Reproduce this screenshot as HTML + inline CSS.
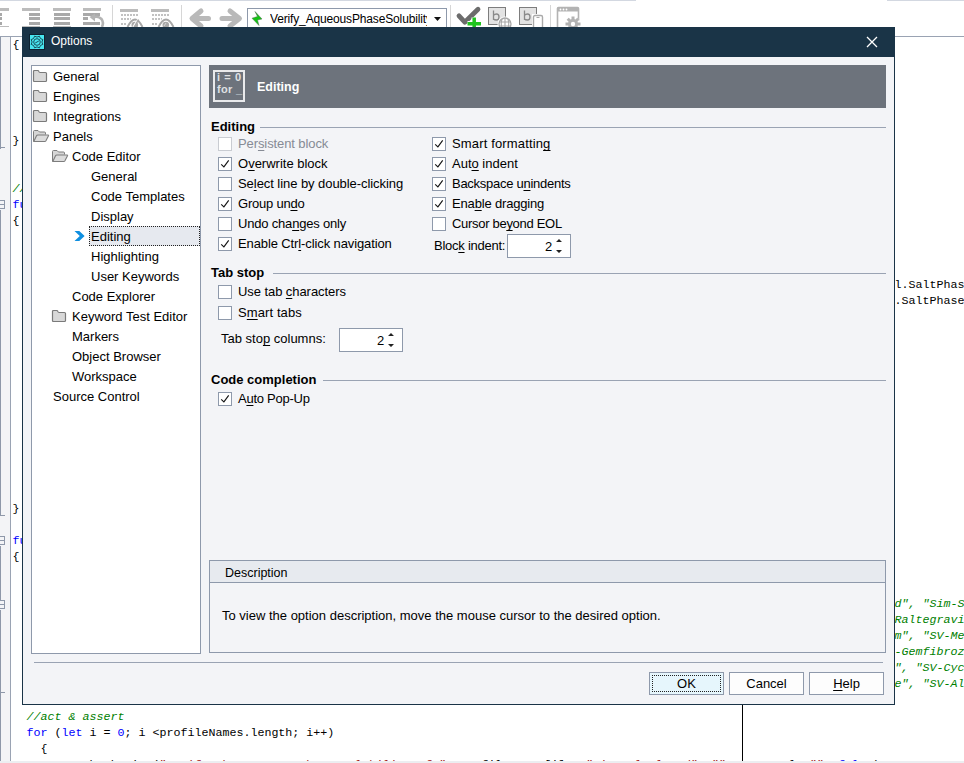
<!DOCTYPE html><html><head><meta charset="utf-8"><style>
html,body{margin:0;padding:0;}
body{width:964px;height:763px;position:relative;overflow:hidden;background:#fff;font-family:"Liberation Sans",sans-serif;}
.t{position:absolute;white-space:pre;}
u{text-decoration:underline;text-underline-offset:1.5px;text-decoration-skip-ink:none;}
svg{position:absolute;overflow:visible;}
</style></head><body>
<div style="position:absolute;left:0px;top:0px;width:636px;height:1px;background:#d3d8e1"></div>
<div style="position:absolute;left:887px;top:0px;width:77px;height:1px;background:#d3d8e1"></div>
<div style="position:absolute;left:0px;top:8px;width:9px;height:3px;background:#bcbcbc"></div>
<div style="position:absolute;left:0px;top:13px;width:2px;height:3px;background:#a9a9a9"></div>
<div style="position:absolute;left:0px;top:17px;width:2px;height:3px;background:#a9a9a9"></div>
<div style="position:absolute;left:0px;top:22px;width:2px;height:3px;background:#a9a9a9"></div>
<div style="position:absolute;left:0px;top:25.5px;width:9px;height:1.5px;background:#bcbcbc"></div>
<div style="position:absolute;left:22px;top:8px;width:18px;height:3px;background:#bcbcbc"></div>
<div style="position:absolute;left:29px;top:13px;width:11px;height:3px;background:#a9a9a9"></div>
<div style="position:absolute;left:29px;top:17px;width:11px;height:3px;background:#a9a9a9"></div>
<div style="position:absolute;left:29px;top:22px;width:11px;height:3px;background:#a9a9a9"></div>
<div style="position:absolute;left:22px;top:25.5px;width:18px;height:1.5px;background:#bcbcbc"></div>
<div style="position:absolute;left:53px;top:8px;width:18px;height:3px;background:#bcbcbc"></div>
<div style="position:absolute;left:54px;top:13px;width:16px;height:3px;background:#a9a9a9"></div>
<div style="position:absolute;left:54px;top:17px;width:16px;height:3px;background:#a9a9a9"></div>
<div style="position:absolute;left:54px;top:22px;width:16px;height:3px;background:#a9a9a9"></div>
<div style="position:absolute;left:53px;top:25.5px;width:18px;height:1.5px;background:#bcbcbc"></div>
<div style="position:absolute;left:83px;top:8px;width:18px;height:3px;background:#bcbcbc"></div>
<div style="position:absolute;left:83px;top:13px;width:17px;height:3px;background:#a9a9a9"></div>
<div style="position:absolute;left:83px;top:17px;width:5px;height:3px;background:#a9a9a9"></div>
<div style="position:absolute;left:83px;top:22px;width:17px;height:3px;background:#a9a9a9"></div>
<svg style="left:88px;top:14px" width="18" height="14" viewBox="0 0 18 14"><path d="M5 3.5 Q10 1.5 13.5 5 Q16 8.5 14 13" fill="none" stroke="#b4b4b4" stroke-width="2.6"/><path d="M1.5 3 L7 -0.5 L7 7.5 Z" fill="#b4b4b4"/></svg>
<div style="position:absolute;left:112px;top:5px;width:1px;height:22px;background:#d6d6d6"></div>
<div style="position:absolute;left:181px;top:5px;width:1px;height:22px;background:#d6d6d6"></div>
<div style="position:absolute;left:450px;top:5px;width:1px;height:22px;background:#d6d6d6"></div>
<div style="position:absolute;left:550px;top:5px;width:1px;height:22px;background:#d6d6d6"></div>
<div style="position:absolute;left:120px;top:8.5px;width:18px;height:3px;background:#bcbcbc"></div>
<div style="position:absolute;left:121px;top:13.5px;width:2px;height:2px;background:#c2c2c2"></div>
<div style="position:absolute;left:124px;top:13.5px;width:2px;height:2px;background:#c2c2c2"></div>
<div style="position:absolute;left:127px;top:13.5px;width:2px;height:2px;background:#c2c2c2"></div>
<div style="position:absolute;left:130px;top:13.5px;width:2px;height:2px;background:#c2c2c2"></div>
<div style="position:absolute;left:133px;top:13.5px;width:2px;height:2px;background:#c2c2c2"></div>
<div style="position:absolute;left:136px;top:13.5px;width:2px;height:2px;background:#c2c2c2"></div>
<div style="position:absolute;left:121px;top:18px;width:2px;height:2px;background:#c2c2c2"></div>
<div style="position:absolute;left:124px;top:18px;width:2px;height:2px;background:#c2c2c2"></div>
<div style="position:absolute;left:127px;top:18px;width:2px;height:2px;background:#c2c2c2"></div>
<div style="position:absolute;left:130px;top:18px;width:1px;height:2px;background:#c2c2c2"></div>
<div style="position:absolute;left:121px;top:22.7px;width:2px;height:2px;background:#c2c2c2"></div>
<div style="position:absolute;left:124px;top:22.7px;width:2px;height:2px;background:#c2c2c2"></div>
<svg style="left:126px;top:17px" width="18" height="11" viewBox="0 0 18 11"><path d="M0.5 10.5 Q9 -6 17.5 10.5" fill="#fff" stroke="#ffffff" stroke-width="3"/><path d="M1.5 10 Q9 -5 16.5 10" fill="none" stroke="#a8a8a8" stroke-width="1.9"/><circle cx="8.8" cy="8" r="3.3" fill="#a8a8a8"/><path d="M7 9 L9 6" stroke="#d8d8d8" stroke-width="0.9"/><path d="M6 11.5 L12 2" stroke="#fff" stroke-width="1.2"/><path d="M7.5 11.5 L12.5 2.5" stroke="#a8a8a8" stroke-width="1.4"/></svg>
<div style="position:absolute;left:151px;top:8.5px;width:18px;height:3px;background:#bcbcbc"></div>
<div style="position:absolute;left:152px;top:13.5px;width:2px;height:2px;background:#c2c2c2"></div>
<div style="position:absolute;left:155px;top:13.5px;width:2px;height:2px;background:#c2c2c2"></div>
<div style="position:absolute;left:158px;top:13.5px;width:2px;height:2px;background:#c2c2c2"></div>
<div style="position:absolute;left:161px;top:13.5px;width:2px;height:2px;background:#c2c2c2"></div>
<div style="position:absolute;left:164px;top:13.5px;width:2px;height:2px;background:#c2c2c2"></div>
<div style="position:absolute;left:167px;top:13.5px;width:2px;height:2px;background:#c2c2c2"></div>
<div style="position:absolute;left:152px;top:18px;width:2px;height:2px;background:#c2c2c2"></div>
<div style="position:absolute;left:155px;top:18px;width:2px;height:2px;background:#c2c2c2"></div>
<div style="position:absolute;left:158px;top:18px;width:2px;height:2px;background:#c2c2c2"></div>
<div style="position:absolute;left:161px;top:18px;width:1px;height:2px;background:#c2c2c2"></div>
<div style="position:absolute;left:152px;top:22.7px;width:2px;height:2px;background:#c2c2c2"></div>
<div style="position:absolute;left:155px;top:22.7px;width:2px;height:2px;background:#c2c2c2"></div>
<svg style="left:157px;top:17px" width="18" height="11" viewBox="0 0 18 11"><path d="M0.5 10.5 Q9 -6 17.5 10.5" fill="#fff" stroke="#ffffff" stroke-width="3"/><path d="M1.5 10 Q9 -5 16.5 10" fill="none" stroke="#a8a8a8" stroke-width="1.9"/><circle cx="8.8" cy="8" r="3.3" fill="#a8a8a8"/><path d="M7 9 L9 6" stroke="#d8d8d8" stroke-width="0.9"/></svg>
<svg style="left:188px;top:7px" width="56" height="21" viewBox="0 0 56 21"><path d="M13 4 L4 11.5 L13 19 M5 11.5 L20.5 11.5" fill="none" stroke="#b9b9b9" stroke-width="5" stroke-linecap="round" stroke-linejoin="round"/><path d="M42 4 L51.5 11.5 L42 19 M50 11.5 L34 11.5" fill="none" stroke="#b9b9b9" stroke-width="5" stroke-linecap="round" stroke-linejoin="round"/></svg>
<div style="position:absolute;left:247px;top:8px;width:200px;height:22px;background:#fff;box-sizing:border-box;border:1px solid #8e99ab"></div>
<svg style="left:251px;top:11px" width="12" height="15" viewBox="0 0 12 15"><path d="M4 0.5 L6.5 5.5 L1 7.2 L8 14.5 L6.5 9 L11 8 Z" fill="#12c412" stroke="#5a6a5a" stroke-width="0.5"/></svg>
<div class="t" style="left:270px;top:9px;width:157px;height:20px;overflow:hidden;font-size:12px;line-height:20px;letter-spacing:-0.15px">Verify_AqueousPhaseSolubility</div>
<svg style="left:434px;top:17px" width="7" height="4" viewBox="0 0 7 4"><path d="M0 0 L7 0 L3.5 4 Z" fill="#111"/></svg>
<svg style="left:456px;top:6px" width="26" height="22" viewBox="0 0 26 22"><path d="M3 9.8 L8.8 16.2 L22 3.2" fill="none" stroke="#6c6c6c" stroke-width="4.8" stroke-linecap="round" stroke-linejoin="round"/><path d="M11.5 17.7 L25 17.7 M18.2 11.4 L18.2 22" stroke="#fff" stroke-width="5.5"/><path d="M11.5 17.7 L25 17.7 M18.2 11.4 L18.2 22" stroke="#1fc41f" stroke-width="3.5"/></svg>
<div style="position:absolute;left:488px;top:7px;width:18px;height:18px;background:#e3e3e3;box-sizing:border-box;border:1.5px solid #7d7d7d"></div>
<svg style="left:488px;top:7px" width="18" height="18" viewBox="0 0 18 18"><path d="M5.5 3.5 L5.5 13 M5.5 8.5 Q6.5 7 8.5 7 Q11 7 11 10 Q11 13 8.5 13 Q6.5 13 5.5 12" fill="none" stroke="#8a8a8a" stroke-width="1.3"/></svg>
<svg style="left:496px;top:15px" width="18" height="13" viewBox="0 0 18 13"><circle cx="9" cy="9" r="7.5" fill="#fff"/><circle cx="9" cy="9" r="6" fill="none" stroke="#a8a8a8" stroke-width="1.3"/><path d="M3 7 L15 7 M3 11 L15 11 M9 3 L9 13 M6 4 Q4.5 9 6 13 M12 4 Q13.5 9 12 13" fill="none" stroke="#a8a8a8" stroke-width="1.1"/></svg>
<div style="position:absolute;left:519px;top:7px;width:18px;height:18px;background:#e3e3e3;box-sizing:border-box;border:1.5px solid #7d7d7d"></div>
<svg style="left:519px;top:7px" width="18" height="18" viewBox="0 0 18 18"><path d="M5.5 3.5 L5.5 13 M5.5 8.5 Q6.5 7 8.5 7 Q11 7 11 10 Q11 13 8.5 13 Q6.5 13 5.5 12" fill="none" stroke="#8a8a8a" stroke-width="1.3"/></svg>
<svg style="left:532px;top:14px" width="12" height="14" viewBox="0 0 12 14"><rect x="0" y="0" width="12" height="14" fill="#fff"/><rect x="1.5" y="1.5" width="9" height="13" rx="1.5" fill="#fff" stroke="#aaaaaa" stroke-width="1.4"/><path d="M4.5 3.5 L7.5 3.5" stroke="#aaaaaa" stroke-width="1"/></svg>
<svg style="left:556px;top:6px" width="27" height="22" viewBox="0 0 27 22"><rect x="1.5" y="1.5" width="21" height="21" rx="1" fill="#fff" stroke="#b3b3b3" stroke-width="1.6"/><rect x="1.5" y="1.5" width="21" height="4" fill="#b3b3b3"/><circle cx="4.5" cy="3.5" r="0.9" fill="#fff"/><circle cx="7.5" cy="3.5" r="0.9" fill="#fff"/><circle cx="10.5" cy="3.5" r="0.9" fill="#fff"/><circle cx="17" cy="18" r="7.5" fill="#fff"/><path d="M17 10.5 L17 25.5 M9.5 18 L24.5 18 M11.7 12.7 L22.3 23.3 M22.3 12.7 L11.7 23.3" stroke="#b3b3b3" stroke-width="3"/><circle cx="17" cy="18" r="5" fill="#b3b3b3"/><circle cx="17" cy="18" r="2.2" fill="#fff"/></svg>
<div style="position:absolute;left:0px;top:36px;width:964px;height:1px;background:#9aa3b3"></div>
<div style="position:absolute;left:0px;top:37px;width:10px;height:724px;background:#f3f4f6"></div>
<div style="position:absolute;left:10px;top:37px;width:1px;height:724px;background:#9aa3b3"></div>
<div style="position:absolute;left:0px;top:37px;width:1px;height:112px;background:#8e98a9"></div>
<div style="position:absolute;left:0px;top:147px;width:5px;height:1px;background:#8e98a9"></div>
<div style="position:absolute;left:-5px;top:200px;width:10px;height:9px;box-sizing:border-box;border:1px solid #8e98a9;background:#f3f4f6"></div>
<div style="position:absolute;left:0px;top:204px;width:4px;height:1px;background:#8e98a9"></div>
<div style="position:absolute;left:0px;top:210px;width:1px;height:306px;background:#8e98a9"></div>
<div style="position:absolute;left:0px;top:515px;width:5px;height:1px;background:#8e98a9"></div>
<div style="position:absolute;left:-5px;top:536px;width:10px;height:9px;box-sizing:border-box;border:1px solid #8e98a9;background:#f3f4f6"></div>
<div style="position:absolute;left:0px;top:540px;width:4px;height:1px;background:#8e98a9"></div>
<div style="position:absolute;left:0px;top:546px;width:1px;height:54px;background:#8e98a9"></div>
<div style="position:absolute;left:-5px;top:600px;width:10px;height:9px;box-sizing:border-box;border:1px solid #8e98a9;background:#f3f4f6"></div>
<div style="position:absolute;left:0px;top:604px;width:4px;height:1px;background:#8e98a9"></div>
<div style="position:absolute;left:0px;top:610px;width:1px;height:151px;background:#8e98a9"></div>
<div style="position:absolute;left:0px;top:692px;width:5px;height:1px;background:#8e98a9"></div>
<div style="position:absolute;left:742px;top:705px;width:1px;height:56px;background:#000"></div>
<div class="t" style="left:12.5px;top:36.9px;font-family:'Liberation Mono',monospace;font-size:11.67px;line-height:16px;"><span style="color:#000;">{</span></div>
<div class="t" style="left:12.5px;top:132.9px;font-family:'Liberation Mono',monospace;font-size:11.67px;line-height:16px;"><span style="color:#000;">}</span></div>
<div class="t" style="left:12.5px;top:180.9px;font-family:'Liberation Mono',monospace;font-size:11.67px;line-height:16px;"><span style="color:#008000;font-style:italic;">//arrange</span></div>
<div class="t" style="left:12.5px;top:196.9px;font-family:'Liberation Mono',monospace;font-size:11.67px;line-height:16px;"><span style="color:#0000ff;">function</span></div>
<div class="t" style="left:12.5px;top:212.9px;font-family:'Liberation Mono',monospace;font-size:11.67px;line-height:16px;"><span style="color:#000;">{</span></div>
<div class="t" style="left:12.5px;top:500.9px;font-family:'Liberation Mono',monospace;font-size:11.67px;line-height:16px;"><span style="color:#000;">}</span></div>
<div class="t" style="left:12.5px;top:532.9px;font-family:'Liberation Mono',monospace;font-size:11.67px;line-height:16px;"><span style="color:#0000ff;">function</span></div>
<div class="t" style="left:12.5px;top:548.9px;font-family:'Liberation Mono',monospace;font-size:11.67px;line-height:16px;"><span style="color:#000;">{</span></div>
<div class="t" style="left:26.5px;top:708.9px;font-family:'Liberation Mono',monospace;font-size:11.67px;line-height:16px;"><span style="color:#008000;font-style:italic;">//act &amp; assert</span></div>
<div class="t" style="left:26.5px;top:724.9px;font-family:'Liberation Mono',monospace;font-size:11.67px;line-height:16px;"><span style="color:#0000ff;">for</span><span style="color:#000;"> (</span><span style="color:#0000ff;">let</span><span style="color:#000;"> i = </span><span style="color:#0000ff;">0</span><span style="color:#000;">; i &lt;profileNames.length; i++)</span></div>
<div class="t" style="left:40.5px;top:740.9px;font-family:'Liberation Mono',monospace;font-size:11.67px;line-height:16px;"><span style="color:#000;">{</span></div>
<div class="t" style="left:54.5px;top:757.4px;font-family:'Liberation Mono',monospace;font-size:11.67px;line-height:16px;"><span style="color:#000;">Log.CheckPoint(</span><span style="color:#a31515;">"Verify the aqueous phase solubility of ",</span><span style="color:#000;"> profileNames[i] + </span><span style="color:#a31515;">" is calculated", "",</span><span style="color:#000;"> pmNormal, </span><span style="color:#a31515;">"", </span><span style="color:#0000ff;">false</span><span style="color:#000;">);</span></div>
<div class="t" style="left:894.5px;top:276.9px;font-family:'Liberation Mono',monospace;font-size:11.67px;line-height:16px;"><span style="color:#000;">l.SaltPhase</span></div>
<div class="t" style="left:894.5px;top:292.9px;font-family:'Liberation Mono',monospace;font-size:11.67px;line-height:16px;"><span style="color:#000;">.SaltPhase</span></div>
<div class="t" style="left:894.5px;top:595.9px;font-family:'Liberation Mono',monospace;font-size:11.67px;line-height:16px;"><span style="color:#008000;font-style:italic;">d", "Sim-Sa</span></div>
<div class="t" style="left:894.5px;top:611.9px;font-family:'Liberation Mono',monospace;font-size:11.67px;line-height:16px;"><span style="color:#008000;font-style:italic;">Raltegravir</span></div>
<div class="t" style="left:894.5px;top:627.9px;font-family:'Liberation Mono',monospace;font-size:11.67px;line-height:16px;"><span style="color:#008000;font-style:italic;">m", "SV-Met</span></div>
<div class="t" style="left:894.5px;top:643.9px;font-family:'Liberation Mono',monospace;font-size:11.67px;line-height:16px;"><span style="color:#008000;font-style:italic;">-Gemfibrozil</span></div>
<div class="t" style="left:894.5px;top:659.9px;font-family:'Liberation Mono',monospace;font-size:11.67px;line-height:16px;"><span style="color:#008000;font-style:italic;">", "SV-Cycl</span></div>
<div class="t" style="left:894.5px;top:675.9px;font-family:'Liberation Mono',monospace;font-size:11.67px;line-height:16px;"><span style="color:#008000;font-style:italic;">e", "SV-Alp</span></div>
<div style="position:absolute;left:0px;top:761px;width:964px;height:2px;background:#eceef1"></div>
<div style="position:absolute;left:22px;top:27px;width:873px;height:678px;background:#f3f4f7;box-sizing:border-box;border:1px solid #1a3447;border-top:0"></div>
<div style="position:absolute;left:22px;top:27px;width:873px;height:30px;background:#1a3447"></div>
<svg style="left:29px;top:34px" width="16" height="16" viewBox="0 0 16 16"><rect x="0" y="0" width="16" height="16" fill="#0e2130"/><rect x="1" y="1" width="14" height="14" fill="#48e6f0"/><g transform="translate(1,1)"><path d="M9.41 1.18 L10.46 3.54 L12.82 4.59 L11.90 7.00 L12.82 9.41 L10.46 10.46 L9.41 12.82 L7.00 11.90 L4.59 12.82 L3.54 10.46 L1.18 9.41 L2.10 7.00 L1.18 4.59 L3.54 3.54 L4.59 1.18 L7.00 2.10 Z" fill="none" stroke="#123c48" stroke-width="0.9" stroke-linejoin="round"/><circle cx="7" cy="7" r="3.3" fill="none" stroke="#123c48" stroke-width="0.9"/><path d="M5.2 8 L8.8 6" fill="none" stroke="#123c48" stroke-width="0.9"/></g></svg>
<div class="t" style="left:51px;top:33.34px;font-size:12px;line-height:17px;color:#fff;font-weight:normal;font-family:'Liberation Sans',sans-serif;">Options</div>
<svg style="left:866px;top:36px" width="12" height="12" viewBox="0 0 12 12"><path d="M1 1 L11 11 M11 1 L1 11" stroke="#fff" stroke-width="1.3"/></svg>
<div style="position:absolute;left:31px;top:65px;width:170px;height:589px;background:#fff;box-sizing:border-box;border:1px solid #8e99ab"></div>
<svg style="left:33px;top:70px" width="15" height="13" viewBox="0 0 15 13"><path d="M0.5 1.5 Q0.5 0.5 1.5 0.5 L4.8 0.5 Q5.5 0.5 5.8 1.2 L6.2 2 Q6.5 2.5 7.2 2.5 L12.5 2.5 Q13.5 2.5 13.5 3.5 L13.5 10.5 Q13.5 11.5 12.5 11.5 L1.5 11.5 Q0.5 11.5 0.5 10.5 Z" fill="#d8d8d8" stroke="#7a7a7a" stroke-width="1.2"/></svg>
<div class="t" style="left:53px;top:67.50px;font-size:13px;line-height:18px;color:#000;font-weight:normal;font-family:'Liberation Sans',sans-serif;">General</div>
<svg style="left:33px;top:90px" width="15" height="13" viewBox="0 0 15 13"><path d="M0.5 1.5 Q0.5 0.5 1.5 0.5 L4.8 0.5 Q5.5 0.5 5.8 1.2 L6.2 2 Q6.5 2.5 7.2 2.5 L12.5 2.5 Q13.5 2.5 13.5 3.5 L13.5 10.5 Q13.5 11.5 12.5 11.5 L1.5 11.5 Q0.5 11.5 0.5 10.5 Z" fill="#d8d8d8" stroke="#7a7a7a" stroke-width="1.2"/></svg>
<div class="t" style="left:53px;top:87.50px;font-size:13px;line-height:18px;color:#000;font-weight:normal;font-family:'Liberation Sans',sans-serif;">Engines</div>
<svg style="left:33px;top:110px" width="15" height="13" viewBox="0 0 15 13"><path d="M0.5 1.5 Q0.5 0.5 1.5 0.5 L4.8 0.5 Q5.5 0.5 5.8 1.2 L6.2 2 Q6.5 2.5 7.2 2.5 L12.5 2.5 Q13.5 2.5 13.5 3.5 L13.5 10.5 Q13.5 11.5 12.5 11.5 L1.5 11.5 Q0.5 11.5 0.5 10.5 Z" fill="#d8d8d8" stroke="#7a7a7a" stroke-width="1.2"/></svg>
<div class="t" style="left:53px;top:107.50px;font-size:13px;line-height:18px;color:#000;font-weight:normal;font-family:'Liberation Sans',sans-serif;">Integrations</div>
<svg style="left:33px;top:130px" width="17" height="13" viewBox="0 0 17 13"><path d="M0.5 11.5 L0.5 1.5 Q0.5 0.5 1.5 0.5 L5 0.5 L6.5 2 L11.5 2 Q12.5 2 12.5 3 L12.5 4.5" fill="#d6d6d6" stroke="#7d7d7d" stroke-width="1"/><path d="M0.8 11.5 L3.5 5.8 Q3.9 5 4.8 5 L15.2 5 Q15.8 5 15.5 5.7 L12.8 11 Q12.5 11.5 11.8 11.5 Z" fill="#dcdcdc" stroke="#7d7d7d" stroke-width="1.1" stroke-linejoin="round"/></svg>
<div class="t" style="left:53px;top:127.50px;font-size:13px;line-height:18px;color:#000;font-weight:normal;font-family:'Liberation Sans',sans-serif;">Panels</div>
<svg style="left:52px;top:150px" width="17" height="13" viewBox="0 0 17 13"><path d="M0.5 11.5 L0.5 1.5 Q0.5 0.5 1.5 0.5 L5 0.5 L6.5 2 L11.5 2 Q12.5 2 12.5 3 L12.5 4.5" fill="#d6d6d6" stroke="#7d7d7d" stroke-width="1"/><path d="M0.8 11.5 L3.5 5.8 Q3.9 5 4.8 5 L15.2 5 Q15.8 5 15.5 5.7 L12.8 11 Q12.5 11.5 11.8 11.5 Z" fill="#dcdcdc" stroke="#7d7d7d" stroke-width="1.1" stroke-linejoin="round"/></svg>
<div class="t" style="left:72px;top:147.50px;font-size:13px;line-height:18px;color:#000;font-weight:normal;font-family:'Liberation Sans',sans-serif;">Code Editor</div>
<div class="t" style="left:91px;top:167.50px;font-size:13px;line-height:18px;color:#000;font-weight:normal;font-family:'Liberation Sans',sans-serif;">General</div>
<div class="t" style="left:91px;top:187.50px;font-size:13px;line-height:18px;color:#000;font-weight:normal;font-family:'Liberation Sans',sans-serif;">Code Templates</div>
<div class="t" style="left:91px;top:207.50px;font-size:13px;line-height:18px;color:#000;font-weight:normal;font-family:'Liberation Sans',sans-serif;">Display</div>
<div style="position:absolute;left:89px;top:226px;width:111px;height:20px;background:#e6e9ef;box-sizing:border-box;border:1px dotted #222"></div>
<svg style="left:74px;top:231px" width="11" height="10" viewBox="0 0 11 10"><path d="M0.5 0 L5.3 0 L10.6 5 L5.3 10 L0.5 10 L5.8 5 Z" fill="#0f8fe0"/></svg>
<div class="t" style="left:91px;top:227.50px;font-size:13px;line-height:18px;color:#000;font-weight:normal;font-family:'Liberation Sans',sans-serif;">Editing</div>
<div class="t" style="left:91px;top:247.50px;font-size:13px;line-height:18px;color:#000;font-weight:normal;font-family:'Liberation Sans',sans-serif;">Highlighting</div>
<div class="t" style="left:91px;top:267.50px;font-size:13px;line-height:18px;color:#000;font-weight:normal;font-family:'Liberation Sans',sans-serif;">User Keywords</div>
<div class="t" style="left:72px;top:287.50px;font-size:13px;line-height:18px;color:#000;font-weight:normal;font-family:'Liberation Sans',sans-serif;">Code Explorer</div>
<svg style="left:52px;top:310px" width="15" height="13" viewBox="0 0 15 13"><path d="M0.5 1.5 Q0.5 0.5 1.5 0.5 L4.8 0.5 Q5.5 0.5 5.8 1.2 L6.2 2 Q6.5 2.5 7.2 2.5 L12.5 2.5 Q13.5 2.5 13.5 3.5 L13.5 10.5 Q13.5 11.5 12.5 11.5 L1.5 11.5 Q0.5 11.5 0.5 10.5 Z" fill="#d8d8d8" stroke="#7a7a7a" stroke-width="1.2"/></svg>
<div class="t" style="left:72px;top:307.50px;font-size:13px;line-height:18px;color:#000;font-weight:normal;font-family:'Liberation Sans',sans-serif;">Keyword Test Editor</div>
<div class="t" style="left:72px;top:327.50px;font-size:13px;line-height:18px;color:#000;font-weight:normal;font-family:'Liberation Sans',sans-serif;">Markers</div>
<div class="t" style="left:72px;top:347.50px;font-size:13px;line-height:18px;color:#000;font-weight:normal;font-family:'Liberation Sans',sans-serif;">Object Browser</div>
<div class="t" style="left:72px;top:367.50px;font-size:13px;line-height:18px;color:#000;font-weight:normal;font-family:'Liberation Sans',sans-serif;">Workspace</div>
<div class="t" style="left:53px;top:387.50px;font-size:13px;line-height:18px;color:#000;font-weight:normal;font-family:'Liberation Sans',sans-serif;">Source Control</div>
<div style="position:absolute;left:209px;top:65px;width:677px;height:43px;background:#6d737c"></div>
<div style="position:absolute;left:213px;top:70px;width:32px;height:32px;box-sizing:border-box;border:2px solid #e9eaec"></div>
<div class="t" style="left:217px;top:69.69px;font-size:11px;line-height:15px;color:#dfe0e3;font-weight:bold;font-family:'Liberation Sans',sans-serif;letter-spacing:0.6px">i = 0</div>
<div class="t" style="left:217px;top:81.69px;font-size:11px;line-height:15px;color:#dfe0e3;font-weight:bold;font-family:'Liberation Sans',sans-serif;letter-spacing:0.3px">for _</div>
<div class="t" style="left:257px;top:77.67px;font-size:12.5px;line-height:18px;color:#fff;font-weight:bold;font-family:'Liberation Sans',sans-serif;">Editing</div>
<div class="t" style="left:211px;top:117.50px;font-size:13px;line-height:18px;color:#000;font-weight:bold;font-family:'Liberation Sans',sans-serif;">Editing</div>
<div style="position:absolute;left:260px;top:127px;width:626px;height:1px;background:#9aa3b3"></div>
<div style="position:absolute;left:218px;top:137px;width:14px;height:14px;background:#fff;box-sizing:border-box;border:1px solid #c9ccd2"></div>
<div class="t" style="left:238px;top:134.50px;font-size:13px;line-height:18px;color:#868b95;font-weight:normal;font-family:'Liberation Sans',sans-serif;letter-spacing:-0.1px">Per<u>s</u>istent block</div>
<div style="position:absolute;left:218px;top:157px;width:14px;height:14px;background:#fff;box-sizing:border-box;border:1px solid #8e99ab"></div>
<svg style="left:218px;top:157px" width="14" height="14" viewBox="0 0 14 14"><path d="M3.2 7.3 L5.9 9.8 L10.7 3.4" fill="none" stroke="#151515" stroke-width="1.15"/></svg>
<div class="t" style="left:238px;top:154.50px;font-size:13px;line-height:18px;color:#000;font-weight:normal;font-family:'Liberation Sans',sans-serif;letter-spacing:0px">O<u>v</u>erwrite block</div>
<div style="position:absolute;left:218px;top:177px;width:14px;height:14px;background:#fff;box-sizing:border-box;border:1px solid #8e99ab"></div>
<div class="t" style="left:238px;top:174.50px;font-size:13px;line-height:18px;color:#000;font-weight:normal;font-family:'Liberation Sans',sans-serif;letter-spacing:-0.06px">Se<u>l</u>ect line by double-clicking</div>
<div style="position:absolute;left:218px;top:197px;width:14px;height:14px;background:#fff;box-sizing:border-box;border:1px solid #8e99ab"></div>
<svg style="left:218px;top:197px" width="14" height="14" viewBox="0 0 14 14"><path d="M3.2 7.3 L5.9 9.8 L10.7 3.4" fill="none" stroke="#151515" stroke-width="1.15"/></svg>
<div class="t" style="left:238px;top:194.50px;font-size:13px;line-height:18px;color:#000;font-weight:normal;font-family:'Liberation Sans',sans-serif;letter-spacing:-0.22px">Group un<u>d</u>o</div>
<div style="position:absolute;left:218px;top:217px;width:14px;height:14px;background:#fff;box-sizing:border-box;border:1px solid #8e99ab"></div>
<div class="t" style="left:238px;top:214.50px;font-size:13px;line-height:18px;color:#000;font-weight:normal;font-family:'Liberation Sans',sans-serif;letter-spacing:-0.19px">Undo cha<u>n</u>ges only</div>
<div style="position:absolute;left:218px;top:237px;width:14px;height:14px;background:#fff;box-sizing:border-box;border:1px solid #8e99ab"></div>
<svg style="left:218px;top:237px" width="14" height="14" viewBox="0 0 14 14"><path d="M3.2 7.3 L5.9 9.8 L10.7 3.4" fill="none" stroke="#151515" stroke-width="1.15"/></svg>
<div class="t" style="left:238px;top:234.50px;font-size:13px;line-height:18px;color:#000;font-weight:normal;font-family:'Liberation Sans',sans-serif;letter-spacing:-0.11px">Enable Ctr<u>l</u>-click navigation</div>
<div style="position:absolute;left:432px;top:137px;width:14px;height:14px;background:#fff;box-sizing:border-box;border:1px solid #8e99ab"></div>
<svg style="left:432px;top:137px" width="14" height="14" viewBox="0 0 14 14"><path d="M3.2 7.3 L5.9 9.8 L10.7 3.4" fill="none" stroke="#151515" stroke-width="1.15"/></svg>
<div class="t" style="left:452px;top:134.50px;font-size:13px;line-height:18px;color:#000;font-weight:normal;font-family:'Liberation Sans',sans-serif;letter-spacing:0.15px">Smart formattin<u>g</u></div>
<div style="position:absolute;left:432px;top:157px;width:14px;height:14px;background:#fff;box-sizing:border-box;border:1px solid #8e99ab"></div>
<svg style="left:432px;top:157px" width="14" height="14" viewBox="0 0 14 14"><path d="M3.2 7.3 L5.9 9.8 L10.7 3.4" fill="none" stroke="#151515" stroke-width="1.15"/></svg>
<div class="t" style="left:452px;top:154.50px;font-size:13px;line-height:18px;color:#000;font-weight:normal;font-family:'Liberation Sans',sans-serif;letter-spacing:0px">Aut<u>o</u> indent</div>
<div style="position:absolute;left:432px;top:177px;width:14px;height:14px;background:#fff;box-sizing:border-box;border:1px solid #8e99ab"></div>
<svg style="left:432px;top:177px" width="14" height="14" viewBox="0 0 14 14"><path d="M3.2 7.3 L5.9 9.8 L10.7 3.4" fill="none" stroke="#151515" stroke-width="1.15"/></svg>
<div class="t" style="left:452px;top:174.50px;font-size:13px;line-height:18px;color:#000;font-weight:normal;font-family:'Liberation Sans',sans-serif;letter-spacing:-0.27px">Backspace u<u>n</u>indents</div>
<div style="position:absolute;left:432px;top:197px;width:14px;height:14px;background:#fff;box-sizing:border-box;border:1px solid #8e99ab"></div>
<svg style="left:432px;top:197px" width="14" height="14" viewBox="0 0 14 14"><path d="M3.2 7.3 L5.9 9.8 L10.7 3.4" fill="none" stroke="#151515" stroke-width="1.15"/></svg>
<div class="t" style="left:452px;top:194.50px;font-size:13px;line-height:18px;color:#000;font-weight:normal;font-family:'Liberation Sans',sans-serif;letter-spacing:-0.17px">Ena<u>b</u>le dragging</div>
<div style="position:absolute;left:432px;top:217px;width:14px;height:14px;background:#fff;box-sizing:border-box;border:1px solid #8e99ab"></div>
<div class="t" style="left:452px;top:214.50px;font-size:13px;line-height:18px;color:#000;font-weight:normal;font-family:'Liberation Sans',sans-serif;letter-spacing:-0.3px">Cursor be<u>y</u>ond EOL</div>
<div class="t" style="left:434px;top:236.50px;font-size:13px;line-height:18px;color:#000;font-weight:normal;font-family:'Liberation Sans',sans-serif;letter-spacing:-0.25px">Bloc<u>k</u> indent:</div>
<div style="position:absolute;left:507px;top:234px;width:64px;height:24px;background:#fff;box-sizing:border-box;border:1px solid #8e99ab"></div>
<div class="t" style="left:545px;top:237.50px;font-size:13px;line-height:18px;color:#000;font-weight:normal;font-family:'Liberation Sans',sans-serif;">2</div>
<svg style="left:556px;top:239px" width="6" height="14" viewBox="0 0 6 14"><path d="M0 3 L3 0 L6 3 Z M0 11 L3 14 L6 11 Z" fill="#222"/></svg>
<div class="t" style="left:211px;top:263.50px;font-size:13px;line-height:18px;color:#000;font-weight:bold;font-family:'Liberation Sans',sans-serif;">Tab stop</div>
<div style="position:absolute;left:273px;top:273px;width:613px;height:1px;background:#9aa3b3"></div>
<div style="position:absolute;left:218px;top:285px;width:14px;height:14px;background:#fff;box-sizing:border-box;border:1px solid #8e99ab"></div>
<div class="t" style="left:238px;top:282.50px;font-size:13px;line-height:18px;color:#000;font-weight:normal;font-family:'Liberation Sans',sans-serif;letter-spacing:-0.07px">Use tab <u>c</u>haracters</div>
<div style="position:absolute;left:218px;top:306px;width:14px;height:14px;background:#fff;box-sizing:border-box;border:1px solid #8e99ab"></div>
<div class="t" style="left:238px;top:303.50px;font-size:13px;line-height:18px;color:#000;font-weight:normal;font-family:'Liberation Sans',sans-serif;letter-spacing:0.1px">S<u>m</u>art tabs</div>
<div class="t" style="left:221px;top:329.50px;font-size:13px;line-height:18px;color:#000;font-weight:normal;font-family:'Liberation Sans',sans-serif;">Tab sto<u>p</u> columns:</div>
<div style="position:absolute;left:339px;top:328px;width:64px;height:24px;background:#fff;box-sizing:border-box;border:1px solid #8e99ab"></div>
<div class="t" style="left:377px;top:331.50px;font-size:13px;line-height:18px;color:#000;font-weight:normal;font-family:'Liberation Sans',sans-serif;">2</div>
<svg style="left:388px;top:333px" width="6" height="14" viewBox="0 0 6 14"><path d="M0 3 L3 0 L6 3 Z M0 11 L3 14 L6 11 Z" fill="#222"/></svg>
<div class="t" style="left:211px;top:370.50px;font-size:13px;line-height:18px;color:#000;font-weight:bold;font-family:'Liberation Sans',sans-serif;">Code completion</div>
<div style="position:absolute;left:323px;top:380px;width:563px;height:1px;background:#9aa3b3"></div>
<div style="position:absolute;left:218px;top:392px;width:14px;height:14px;background:#fff;box-sizing:border-box;border:1px solid #8e99ab"></div>
<svg style="left:218px;top:392px" width="14" height="14" viewBox="0 0 14 14"><path d="M3.2 7.3 L5.9 9.8 L10.7 3.4" fill="none" stroke="#151515" stroke-width="1.15"/></svg>
<div class="t" style="left:238px;top:389.50px;font-size:13px;line-height:18px;color:#000;font-weight:normal;font-family:'Liberation Sans',sans-serif;letter-spacing:-0.26px">A<u>u</u>to Pop-Up</div>
<div style="position:absolute;left:209px;top:560px;width:677px;height:93px;box-sizing:border-box;border:1px solid #8e99ab;background:#f3f4f7"></div>
<div style="position:absolute;left:210px;top:561px;width:675px;height:21px;background:#e7eaef"></div>
<div style="position:absolute;left:210px;top:582px;width:675px;height:1px;background:#8e99ab"></div>
<div class="t" style="left:225px;top:563.67px;font-size:12.5px;line-height:18px;color:#000;font-weight:normal;font-family:'Liberation Sans',sans-serif;">Description</div>
<div class="t" style="left:222px;top:606.50px;font-size:13px;line-height:18px;color:#000;font-weight:normal;font-family:'Liberation Sans',sans-serif;">To view the option description, move the mouse cursor to the desired option.</div>
<div style="position:absolute;left:34px;top:662px;width:849px;height:1px;background:#9aa3b3"></div>
<div style="position:absolute;left:649px;top:672px;width:75px;height:23px;background:#e6f6fc;box-sizing:border-box;border:1px solid #8e99ab"></div>
<div style="position:absolute;left:652px;top:675px;width:69px;height:17px;box-sizing:border-box;border:1px dotted #222"></div>
<div class="t" style="left:649px;top:672px;width:75px;height:23px;line-height:23px;text-align:center;font-size:13px;color:#000">OK</div>
<div style="position:absolute;left:729px;top:672px;width:75px;height:23px;background:#fdfdfd;box-sizing:border-box;border:1px solid #8e99ab"></div>
<div class="t" style="left:729px;top:672px;width:75px;height:23px;line-height:23px;text-align:center;font-size:13px;color:#000">Cancel</div>
<div style="position:absolute;left:809px;top:672px;width:75px;height:23px;background:#fdfdfd;box-sizing:border-box;border:1px solid #8e99ab"></div>
<div class="t" style="left:809px;top:672px;width:75px;height:23px;line-height:23px;text-align:center;font-size:13px;color:#000"><u>H</u>elp</div>
</body></html>
